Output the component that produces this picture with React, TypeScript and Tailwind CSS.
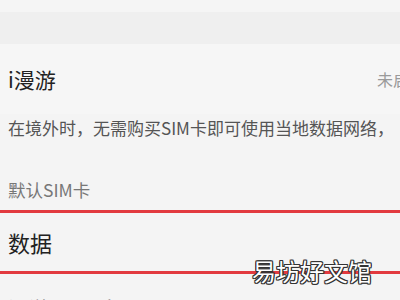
export default function App() {
  const font = { fontFamily: '"Noto Sans CJK SC", "Noto Sans", sans-serif' }

  return (
    <div className="relative h-[300px] w-[400px] overflow-hidden bg-[#f4f4f4]" style={font}>
      <div className="w-[440px]">
        <div className="h-[12px] bg-[#f5f5f5]" />
        <div className="h-[32px] bg-[#efefef]" />

        <div className="flex h-[70px] items-center justify-between bg-[#f6f6f6] pl-[8px] pr-[15px]">
          <span className="text-[21px] leading-[28px] text-[#222]">i漫游</span>
          <span className="text-[16px] leading-[22px] text-[#9a9a9a]">未启用</span>
        </div>

        <p className="whitespace-nowrap px-[8px] pt-[2px] text-[17px] leading-[24px] text-[#555]">
          在境外时，无需购买SIM卡即可使用当地数据网络，
        </p>

        <p className="px-[8px] pt-[38px] text-[17.5px] leading-[24px] text-[#777]">默认SIM卡</p>

        <div className="mt-[8px] flex h-[64px] items-center border-y-[3px] border-[#e23a3f] px-[8px]">
          <span className="text-[22px] leading-[28px] text-[#222]">数据</span>
        </div>

        <div className="px-[8px] pt-[20px] text-[21px] leading-[28px] text-[#222]">漫游与通话</div>
      </div>

      <div
        className="absolute left-[252px] top-[255px] text-[24px] leading-[32px] text-white"
        style={{ textShadow: "1px 0 #333, -1px 0 #333, 0 1px #333, 0 -1px #333, 1px 1px #333, -1px -1px #333, 1px -1px #333, -1px 1px #333" }}
      >
        易坊好文馆
      </div>
    </div>
  )
}
